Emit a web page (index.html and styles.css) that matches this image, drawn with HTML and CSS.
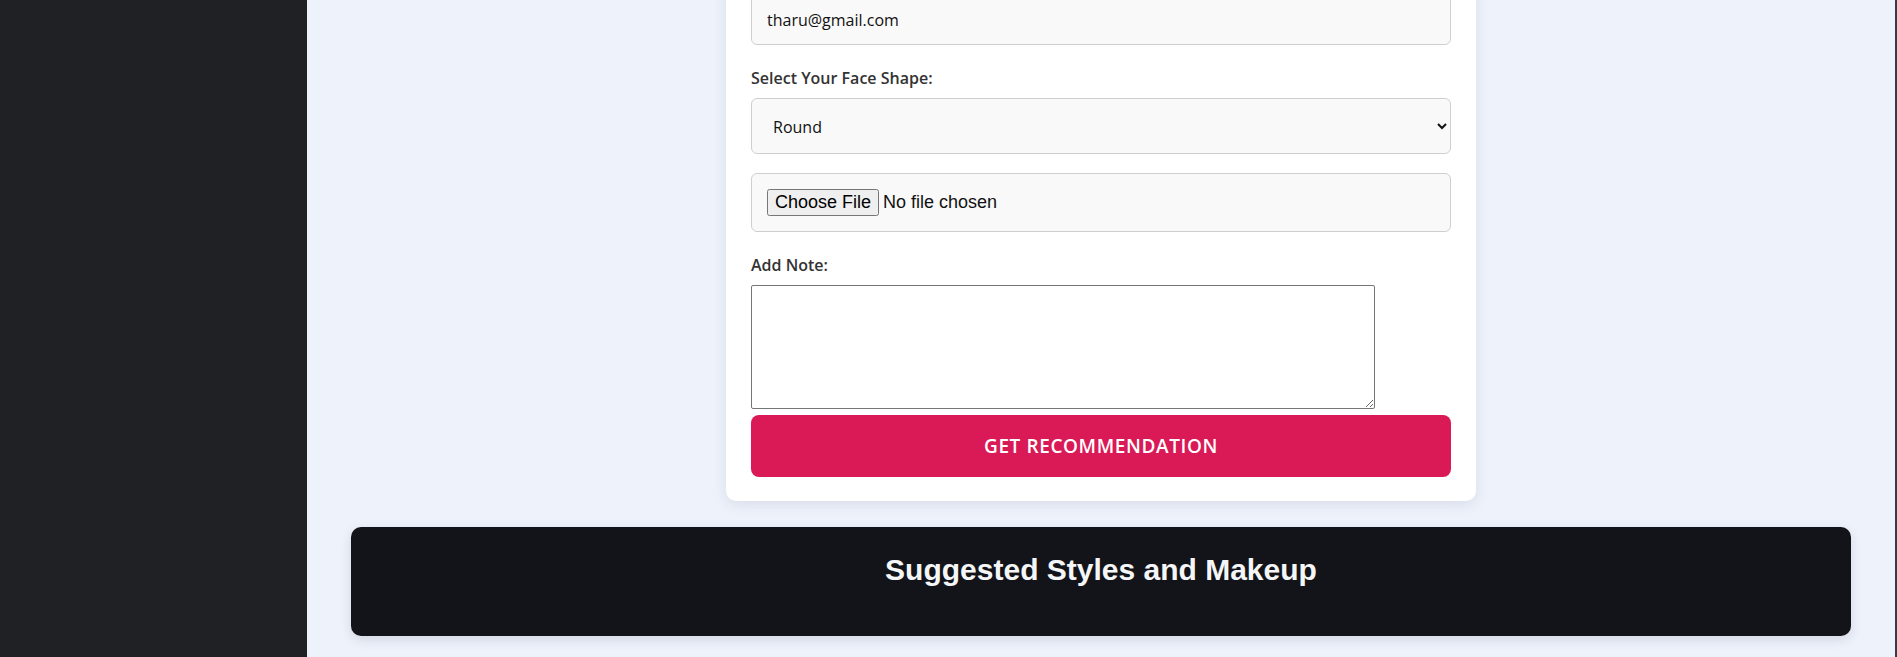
FILE: index.html
```html
<!DOCTYPE html>
<html>
<head>
<meta charset="utf-8">
<link rel="stylesheet" href="styles.css">
</head>
<body>
<div class="layout">
  <aside class="sidebar"></aside>
  <main class="main">
    <form class="card">
      <input class="field email" type="email" value="tharu@gmail.com">
      <label class="label label-first">Select Your Face Shape:</label>
      <select class="field select">
        <option>Round</option>
        <option>Oval</option>
        <option>Square</option>
      </select>
      <div class="file-box">
        <input type="file" class="file">
      </div>
      <label class="label label-second">Add Note:</label>
      <textarea class="note"></textarea>
      <button type="button" class="submit">GET RECOMMENDATION</button>
    </form>
    <section class="results">
      <h2 class="results-title">Suggested Styles and Makeup</h2>
    </section>
  </main>
  <div class="edge"></div>
</div>
</body>
</html>
```
FILE: styles.css
```css
* { box-sizing: border-box; }
html, body { margin: 0; padding: 0; }
body {
  width: 1897px;
  height: 657px;
  overflow: hidden;
  font-family: "Open Sans", "Noto Sans", sans-serif;
  background: #eef2fb;
}
.layout {
  display: flex;
  height: 657px;
}
.sidebar {
  width: 307px;
  flex: none;
  background: #202125;
}
.main {
  flex: 1;
  display: flex;
  flex-direction: column;
  align-items: center;
  background: #eef2fb;
  margin-top: -36px;
}
.edge {
  width: 2px;
  flex: none;
  background: #3a3b40;
}
.card {
  width: 750px;
  background: #ffffff;
  border-radius: 10px;
  padding: 25px 25px 24px;
  box-shadow: 0 4px 14px rgba(40, 50, 90, 0.10);
  display: flex;
  flex-direction: column;
  align-items: flex-start;
}
.field {
  display: block;
  width: 700px;
  height: 56px;
  border: 1px solid #cfcfd2;
  border-radius: 6px;
  background: #f9f9f9;
  font-family: "Open Sans", "Noto Sans", sans-serif;
  font-size: 16px;
  color: #111;
  padding: 0 15px;
  margin: 0;
  outline: none;
}
.email { padding-top: 5px; }
.select {
  padding: 2px 14px 0 17px;
  margin-top: 10px;
}
.label {
  display: block;
  font-size: 16px;
  font-weight: 600;
  color: #333;
  line-height: 20px;
  height: 20px;
}
.label-first { margin-top: 23px; }
.label-second { margin-top: 23px; }
.file-box {
  width: 700px;
  height: 59px;
  margin-top: 19px;
  border: 1px solid #cfcfd2;
  border-radius: 6px;
  background: #f9f9f9;
  padding: 0 15px;
  display: flex;
  align-items: center;
}
.file {
  font-family: "Liberation Sans", Arial, sans-serif;
  font-size: 18px;
  color: #111;
}
.note {
  display: block;
  width: 624px;
  height: 124px;
  margin-top: 10px;
  border: 1px solid #767676;
  border-radius: 2px;
  background: #fff;
  resize: both;
}
.submit {
  display: block;
  width: 700px;
  height: 62px;
  margin-top: 6px;
  border: none;
  border-radius: 8px;
  background: #d91a56;
  color: #ffffff;
  font-family: "Open Sans", "Noto Sans", sans-serif;
  font-size: 19px;
  font-weight: 600;
  letter-spacing: 0.6px;
  cursor: pointer;
}
.results {
  width: 1500px;
  height: 109px;
  margin-top: 26px;
  background: #131419;
  border-radius: 10px;
  box-shadow: 0 4px 12px rgba(20, 30, 60, 0.12);
  padding-top: 26px;
}
.results-title {
  margin: 0;
  text-align: center;
  font-family: "Liberation Sans", Arial, sans-serif;
  font-weight: 700;
  font-size: 30px;
  color: #f5f6f8;
}
```
